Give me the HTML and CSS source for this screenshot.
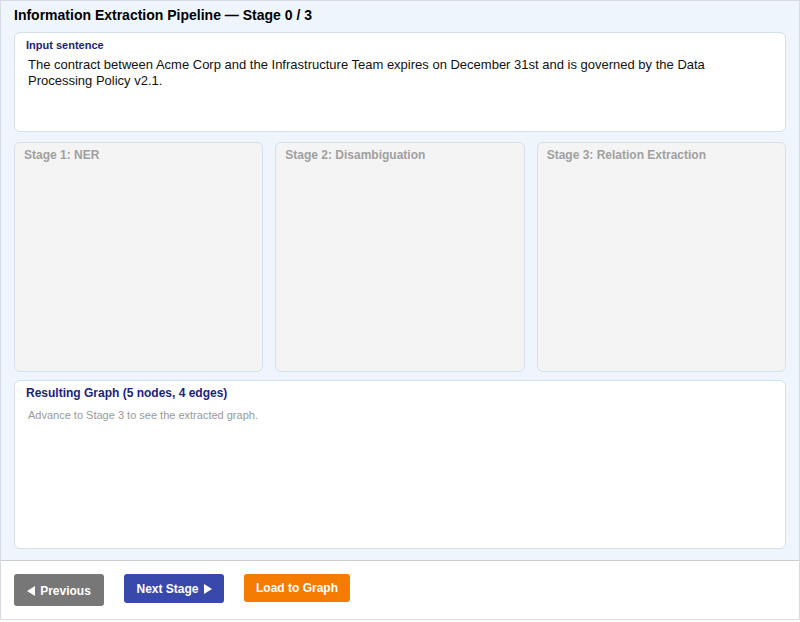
FILE: index.html
```html
<!DOCTYPE html>
<html lang="en">
<head>
  <meta charset="UTF-8" />
  <title>Information Extraction Pipeline</title>
  <link rel="stylesheet" href="styles.css">
</head>
<body>
  <div class="app">
    <div class="main">
      <h1 class="title">Information Extraction Pipeline — Stage 0 / 3</h1>

      <div class="card input-card">
        <div class="card-label">Input sentence</div>
        <p class="sentence">The contract between Acme Corp and the Infrastructure Team expires on December 31st and is governed by the Data Processing Policy v2.1.</p>
      </div>

      <div class="stages">
        <div class="stage"><div class="stage-title">Stage 1: NER</div></div>
        <div class="stage"><div class="stage-title">Stage 2: Disambiguation</div></div>
        <div class="stage"><div class="stage-title">Stage 3: Relation Extraction</div></div>
      </div>

      <div class="card graph-card">
        <div class="card-label graph-label">Resulting Graph (5 nodes, 4 edges)</div>
        <p class="hint">Advance to Stage 3 to see the extracted graph.</p>
      </div>
    </div>

    <div class="footer">
      <button class="btn btn-prev">
        <svg width="8" height="10" viewBox="0 0 8 10"><path d="M8 0 L0 5 L8 10 Z" fill="#fff"/></svg>
        Previous
      </button>
      <button class="btn btn-next">
        Next Stage
        <svg width="8" height="10" viewBox="0 0 8 10"><path d="M0 0 L8 5 L0 10 Z" fill="#fff"/></svg>
      </button>
      <button class="btn btn-load">Load to Graph</button>
    </div>
  </div>
</body>
</html>
```

FILE: styles.css
```css
* {
  box-sizing: border-box;
  margin: 0;
  padding: 0;
}

html, body {
  height: 100%;
  font-family: "Liberation Sans", Arial, sans-serif;
  background: #ffffff;
  color: #111;
}

.app {
  width: 800px;
  height: 620px;
  border: 1px solid #d5dbe1;
  border-bottom-color: #dcdcdc;
  display: flex;
  flex-direction: column;
}

.main {
  background: #eef5fd;
  padding: 5px 13px 11px;
  border-bottom: 1px solid #c9cdd1;
}

.title {
  font-size: 14px;
  font-weight: bold;
  line-height: 18px;
  margin-bottom: 8px;
  color: #000;
}

.card {
  background: #fff;
  border: 1px solid #d6e0ea;
  border-radius: 6px;
}

.input-card {
  height: 100px;
  padding: 6px 11px;
}

.card-label {
  font-size: 11px;
  font-weight: bold;
  line-height: 13px;
  color: #1a237e;
}

.sentence {
  font-size: 13px;
  line-height: 16px;
  margin-top: 5px;
  padding-left: 2px;
  max-width: 720px;
  color: #111;
}

.stages {
  display: grid;
  grid-template-columns: repeat(3, 1fr);
  gap: 12px;
  margin-top: 10px;
}

.stage {
  height: 230px;
  background: #f4f4f4;
  border: 1px solid #d6e0ea;
  border-radius: 6px;
  padding: 5px 9px;
}

.stage-title {
  font-size: 12px;
  font-weight: bold;
  line-height: 14px;
  color: #a0a0a0;
}

.graph-card {
  height: 169px;
  margin-top: 8px;
  padding: 5px 11px;
}

.graph-label {
  font-size: 12px;
  line-height: 14px;
}

.hint {
  font-size: 11px;
  line-height: 13px;
  color: #999;
  margin-top: 9px;
  padding-left: 2px;
}

.footer {
  flex: 1;
  background: #fff;
  display: flex;
  align-items: flex-start;
  gap: 20px;
  padding: 13px 13px;
}

.btn {
  border: none;
  border-radius: 3px;
  color: #fff;
  font-family: "Liberation Sans", Arial, sans-serif;
  font-size: 12px;
  font-weight: bold;
  display: flex;
  align-items: center;
  justify-content: center;
  gap: 5px;
  cursor: pointer;
}

.btn-prev {
  background: #777777;
  width: 90px;
  height: 32px;
  padding-top: 2px;
}

.btn-next {
  background: #3949ab;
  width: 100px;
  height: 29px;
}

.btn-load {
  background: #f57c00;
  width: 106px;
  height: 28px;
}
```
